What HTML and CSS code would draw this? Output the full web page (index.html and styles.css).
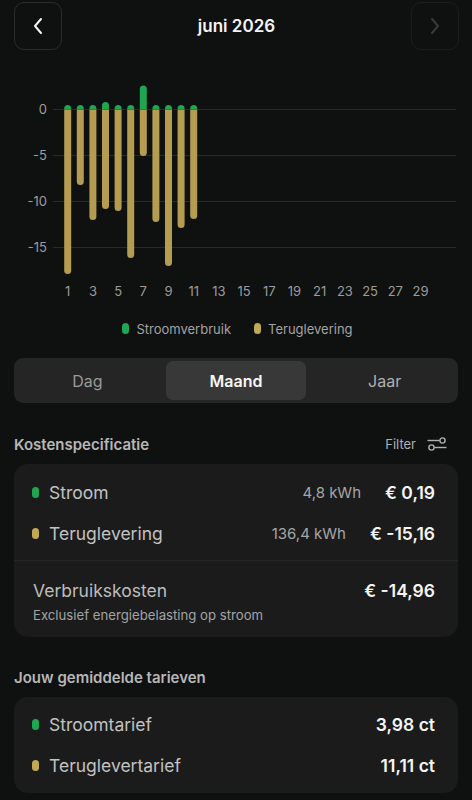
FILE: index.html
```html
<!DOCTYPE html>
<html lang="nl">
<head>
  <meta charset="UTF-8">
  <meta name="viewport" content="width=device-width, initial-scale=1.0">
  <title>Verbruik juni 2026</title>
  <link rel="stylesheet" href="styles.css">
</head>
<body>

  <header class="topbar">
    <button class="nav-btn" aria-label="Vorige maand">
      <svg width="12" height="18" viewBox="0 0 12 18"><path d="M9 2 L3 9 L9 16" fill="none" stroke="currentColor" stroke-width="2" stroke-linecap="round" stroke-linejoin="round"/></svg>
    </button>
    <h1 class="title">juni 2026</h1>
    <button class="nav-btn disabled" aria-label="Volgende maand">
      <svg width="12" height="18" viewBox="0 0 12 18"><path d="M3 2 L9 9 L3 16" fill="none" stroke="currentColor" stroke-width="2" stroke-linecap="round" stroke-linejoin="round"/></svg>
    </button>
  </header>

  <!-- Chart -->
  <section class="chart">
    <svg width="472" height="240" viewBox="0 0 472 240">
      <g class="grid">
        <line x1="53" y1="39.5" x2="456" y2="39.5"/>
        <line x1="53" y1="85.5" x2="456" y2="85.5"/>
        <line x1="53" y1="131.5" x2="456" y2="131.5"/>
        <line x1="53" y1="177.5" x2="456" y2="177.5"/>
      </g>
      <g class="axis-y">
        <text x="47" y="44">0</text>
        <text x="47" y="90">-5</text>
        <text x="47" y="136">-10</text>
        <text x="47" y="182">-15</text>
      </g>
      <g class="bars-green">
        <path d="M64.2 39 V38.5 A3.5 3.5 0 0 1 71.2 38.5 V39 Z"/>
        <path d="M76.8 39 V38.5 A3.5 3.5 0 0 1 83.8 38.5 V39 Z"/>
        <path d="M89.4 39 V38.5 A3.5 3.5 0 0 1 96.4 38.5 V39 Z"/>
        <path d="M102 39 V35.5 A3.5 3.5 0 0 1 109 35.5 V39 Z"/>
        <path d="M114.6 39 V38.5 A3.5 3.5 0 0 1 121.6 38.5 V39 Z"/>
        <path d="M127.2 39 V38.5 A3.5 3.5 0 0 1 134.2 38.5 V39 Z"/>
        <path d="M139.8 39 V19 A3.5 3.5 0 0 1 146.8 19 V39 Z"/>
        <path d="M152.4 39 V38.5 A3.5 3.5 0 0 1 159.4 38.5 V39 Z"/>
        <path d="M165 39 V38.5 A3.5 3.5 0 0 1 172 38.5 V39 Z"/>
        <path d="M177.6 39 V38.5 A3.5 3.5 0 0 1 184.6 38.5 V39 Z"/>
        <path d="M190.2 39 V38.5 A3.5 3.5 0 0 1 197.2 38.5 V39 Z"/>
      </g>
      <g class="bars-gold">
        <path d="M64.2 39.5 V200.5 A3.5 3.5 0 0 0 71.2 200.5 V39.5 Z"/>
        <path d="M76.8 39.5 V111.5 A3.5 3.5 0 0 0 83.8 111.5 V39.5 Z"/>
        <path d="M89.4 39.5 V146.5 A3.5 3.5 0 0 0 96.4 146.5 V39.5 Z"/>
        <path d="M102 39.5 V135.5 A3.5 3.5 0 0 0 109 135.5 V39.5 Z"/>
        <path d="M114.6 39.5 V137.5 A3.5 3.5 0 0 0 121.6 137.5 V39.5 Z"/>
        <path d="M127.2 39.5 V184.5 A3.5 3.5 0 0 0 134.2 184.5 V39.5 Z"/>
        <path d="M139.8 39.5 V82.5 A3.5 3.5 0 0 0 146.8 82.5 V39.5 Z"/>
        <path d="M152.4 39.5 V148.5 A3.5 3.5 0 0 0 159.4 148.5 V39.5 Z"/>
        <path d="M165 39.5 V192.5 A3.5 3.5 0 0 0 172 192.5 V39.5 Z"/>
        <path d="M177.6 39.5 V154.5 A3.5 3.5 0 0 0 184.6 154.5 V39.5 Z"/>
        <path d="M190.2 39.5 V145.5 A3.5 3.5 0 0 0 197.2 145.5 V39.5 Z"/>
      </g>
      <g class="axis-x">
        <text x="67.7" y="226">1</text>
        <text x="92.9" y="226">3</text>
        <text x="118.1" y="226">5</text>
        <text x="143.3" y="226">7</text>
        <text x="168.5" y="226">9</text>
        <text x="193.7" y="226">11</text>
        <text x="218.9" y="226">13</text>
        <text x="244.1" y="226">15</text>
        <text x="269.3" y="226">17</text>
        <text x="294.5" y="226">19</text>
        <text x="319.7" y="226">21</text>
        <text x="344.9" y="226">23</text>
        <text x="370.1" y="226">25</text>
        <text x="395.3" y="226">27</text>
        <text x="420.5" y="226">29</text>
      </g>
    </svg>

    <div class="legend">
      <span class="legend-item"><i class="dot green"></i>Stroomverbruik</span>
      <span class="legend-item"><i class="dot gold"></i>Teruglevering</span>
    </div>
  </section>

  <!-- Period switch -->
  <div class="segmented">
    <button class="segment">Dag</button>
    <button class="segment active">Maand</button>
    <button class="segment">Jaar</button>
  </div>

  <!-- Costs -->
  <section class="block">
    <div class="block-head">
      <h2>Kostenspecificatie</h2>
      <button class="filter">Filter
        <svg width="20" height="14" viewBox="0 0 20 14"><g fill="none" stroke="currentColor" stroke-width="1.4"><line x1="0.5" y1="3.5" x2="12.5" y2="3.5"/><circle cx="15.5" cy="3.5" r="2.6"/><line x1="7.5" y1="10.5" x2="19.5" y2="10.5"/><circle cx="4.5" cy="10.5" r="2.6"/></g></svg>
      </button>
    </div>

    <div class="card">
      <div class="rows">
        <div class="row">
          <i class="dot green"></i>
          <span class="label">Stroom</span>
          <span class="amount">4,8 kWh</span>
          <span class="value">€ 0,19</span>
        </div>
        <div class="row">
          <i class="dot gold"></i>
          <span class="label">Teruglevering</span>
          <span class="amount">136,4 kWh</span>
          <span class="value">€ -15,16</span>
        </div>
      </div>
      <div class="total">
        <div class="total-line">
          <span class="label">Verbruikskosten</span>
          <span class="value">€ -14,96</span>
        </div>
        <p class="note">Exclusief energiebelasting op stroom</p>
      </div>
    </div>
  </section>

  <!-- Tariffs -->
  <section class="block">
    <div class="block-head">
      <h2>Jouw gemiddelde tarieven</h2>
    </div>
    <div class="card">
      <div class="rows tariffs">
        <div class="row">
          <i class="dot green"></i>
          <span class="label">Stroomtarief</span>
          <span class="value">3,98 ct</span>
        </div>
        <div class="row">
          <i class="dot gold"></i>
          <span class="label">Teruglevertarief</span>
          <span class="value">11,11 ct</span>
        </div>
      </div>
    </div>
  </section>

</body>
</html>
```

FILE: styles.css
```css
* {
  box-sizing: border-box;
}

body {
  margin: 0;
  background: #0f1010;
  color: #f2f2f2;
  font-family: Inter, "Noto Sans", sans-serif;
}

button {
  font-family: inherit;
  background: none;
  border: none;
  color: inherit;
  padding: 0;
  cursor: pointer;
}

/* header */

.topbar {
  display: flex;
  align-items: flex-start;
  justify-content: space-between;
  padding: 2px 13px 0 14px;
  height: 70px;
}

.nav-btn {
  width: 48px;
  height: 48px;
  border: 1px solid #2b2b2c;
  border-radius: 10px;
  display: flex;
  align-items: center;
  justify-content: center;
  color: #f4f4f4;
}

.nav-btn.disabled {
  border-color: #1c1d1d;
  color: #3a3a3a;
}

.title {
  margin: 0;
  font-size: 17px;
  font-weight: 600;
  line-height: 48px;
  color: #f4f4f4;
}

/* chart */

.chart svg {
  display: block;
}

.grid line {
  stroke: #2a2a2c;
  stroke-width: 1.2;
}

.axis-y text {
  text-anchor: end;
  font-size: 13px;
  fill: #9c9c9c;
}

.axis-x text {
  text-anchor: middle;
  font-size: 13px;
  fill: #9c9c9c;
}

.bars-green path {
  fill: #1ea653;
}

.bars-gold path {
  fill: #b49c50;
}

.legend {
  display: flex;
  justify-content: center;
  gap: 23px;
  height: 37px;
  align-items: center;
  padding-left: 3px;
  font-size: 13px;
  color: #a3a3a3;
}

.legend-item {
  display: flex;
  align-items: center;
  gap: 7px;
}

.dot {
  display: inline-block;
  width: 7px;
  height: 11px;
  border-radius: 4px;
  flex: none;
}

.dot.green {
  background: #1ea653;
}

.dot.gold {
  background: #c2a955;
}

/* segmented control */

.segmented {
  display: flex;
  margin: 11px 14px 0;
  height: 45px;
  padding: 3px;
  gap: 8px;
  background: #252525;
  border-radius: 9px;
}

.segment {
  flex: 1;
  border-radius: 7px;
  font-size: 16px;
  color: #9a9a9a;
}

.segment.active {
  background: #383838;
  color: #f6f6f6;
  font-weight: 600;
}

.segment:last-child {
  color: #b0b0b0;
}

/* blocks */

.block {
  margin: 30px 14px 0;
}

.block + .block {
  margin-top: 29px;
}

.block-head {
  display: flex;
  align-items: center;
  justify-content: space-between;
  height: 22px;
  margin-bottom: 9px;
}

.block-head h2 {
  margin: 0;
  font-size: 15px;
  font-weight: 600;
  color: #b7b7b7;
}

.filter {
  display: flex;
  align-items: center;
  gap: 11px;
  font-size: 13px;
  color: #b0b0b0;
  margin-right: 11px;
}

.card {
  background: #1b1b1c;
  border-radius: 14px;
}

.rows {
  padding: 8px 23px 6px 18px;
  border-bottom: 1px solid #252526;
}

.rows.tariffs {
  padding: 7px 23px 7px 18px;
  border-bottom: none;
}

.row {
  display: flex;
  align-items: center;
  height: 41px;
}

.row .label {
  margin-left: 10px;
  flex: 1;
  font-size: 17.5px;
  color: #c2c2c2;
}

.row .amount {
  font-size: 15px;
  color: #a6a6a6;
  margin-right: 24px;
}

.value {
  font-size: 17.5px;
  font-weight: 600;
  color: #f4f4f4;
}

.total {
  padding: 18px 23px 13px 19px;
}

.total-line {
  display: flex;
  align-items: center;
  justify-content: space-between;
  height: 22px;
}

.total-line .label {
  font-size: 17.5px;
  color: #bdbdbd;
}

.note {
  margin: 5px 0 0;
  font-size: 13.2px;
  line-height: 18px;
  color: #a3a3a3;
}
```
